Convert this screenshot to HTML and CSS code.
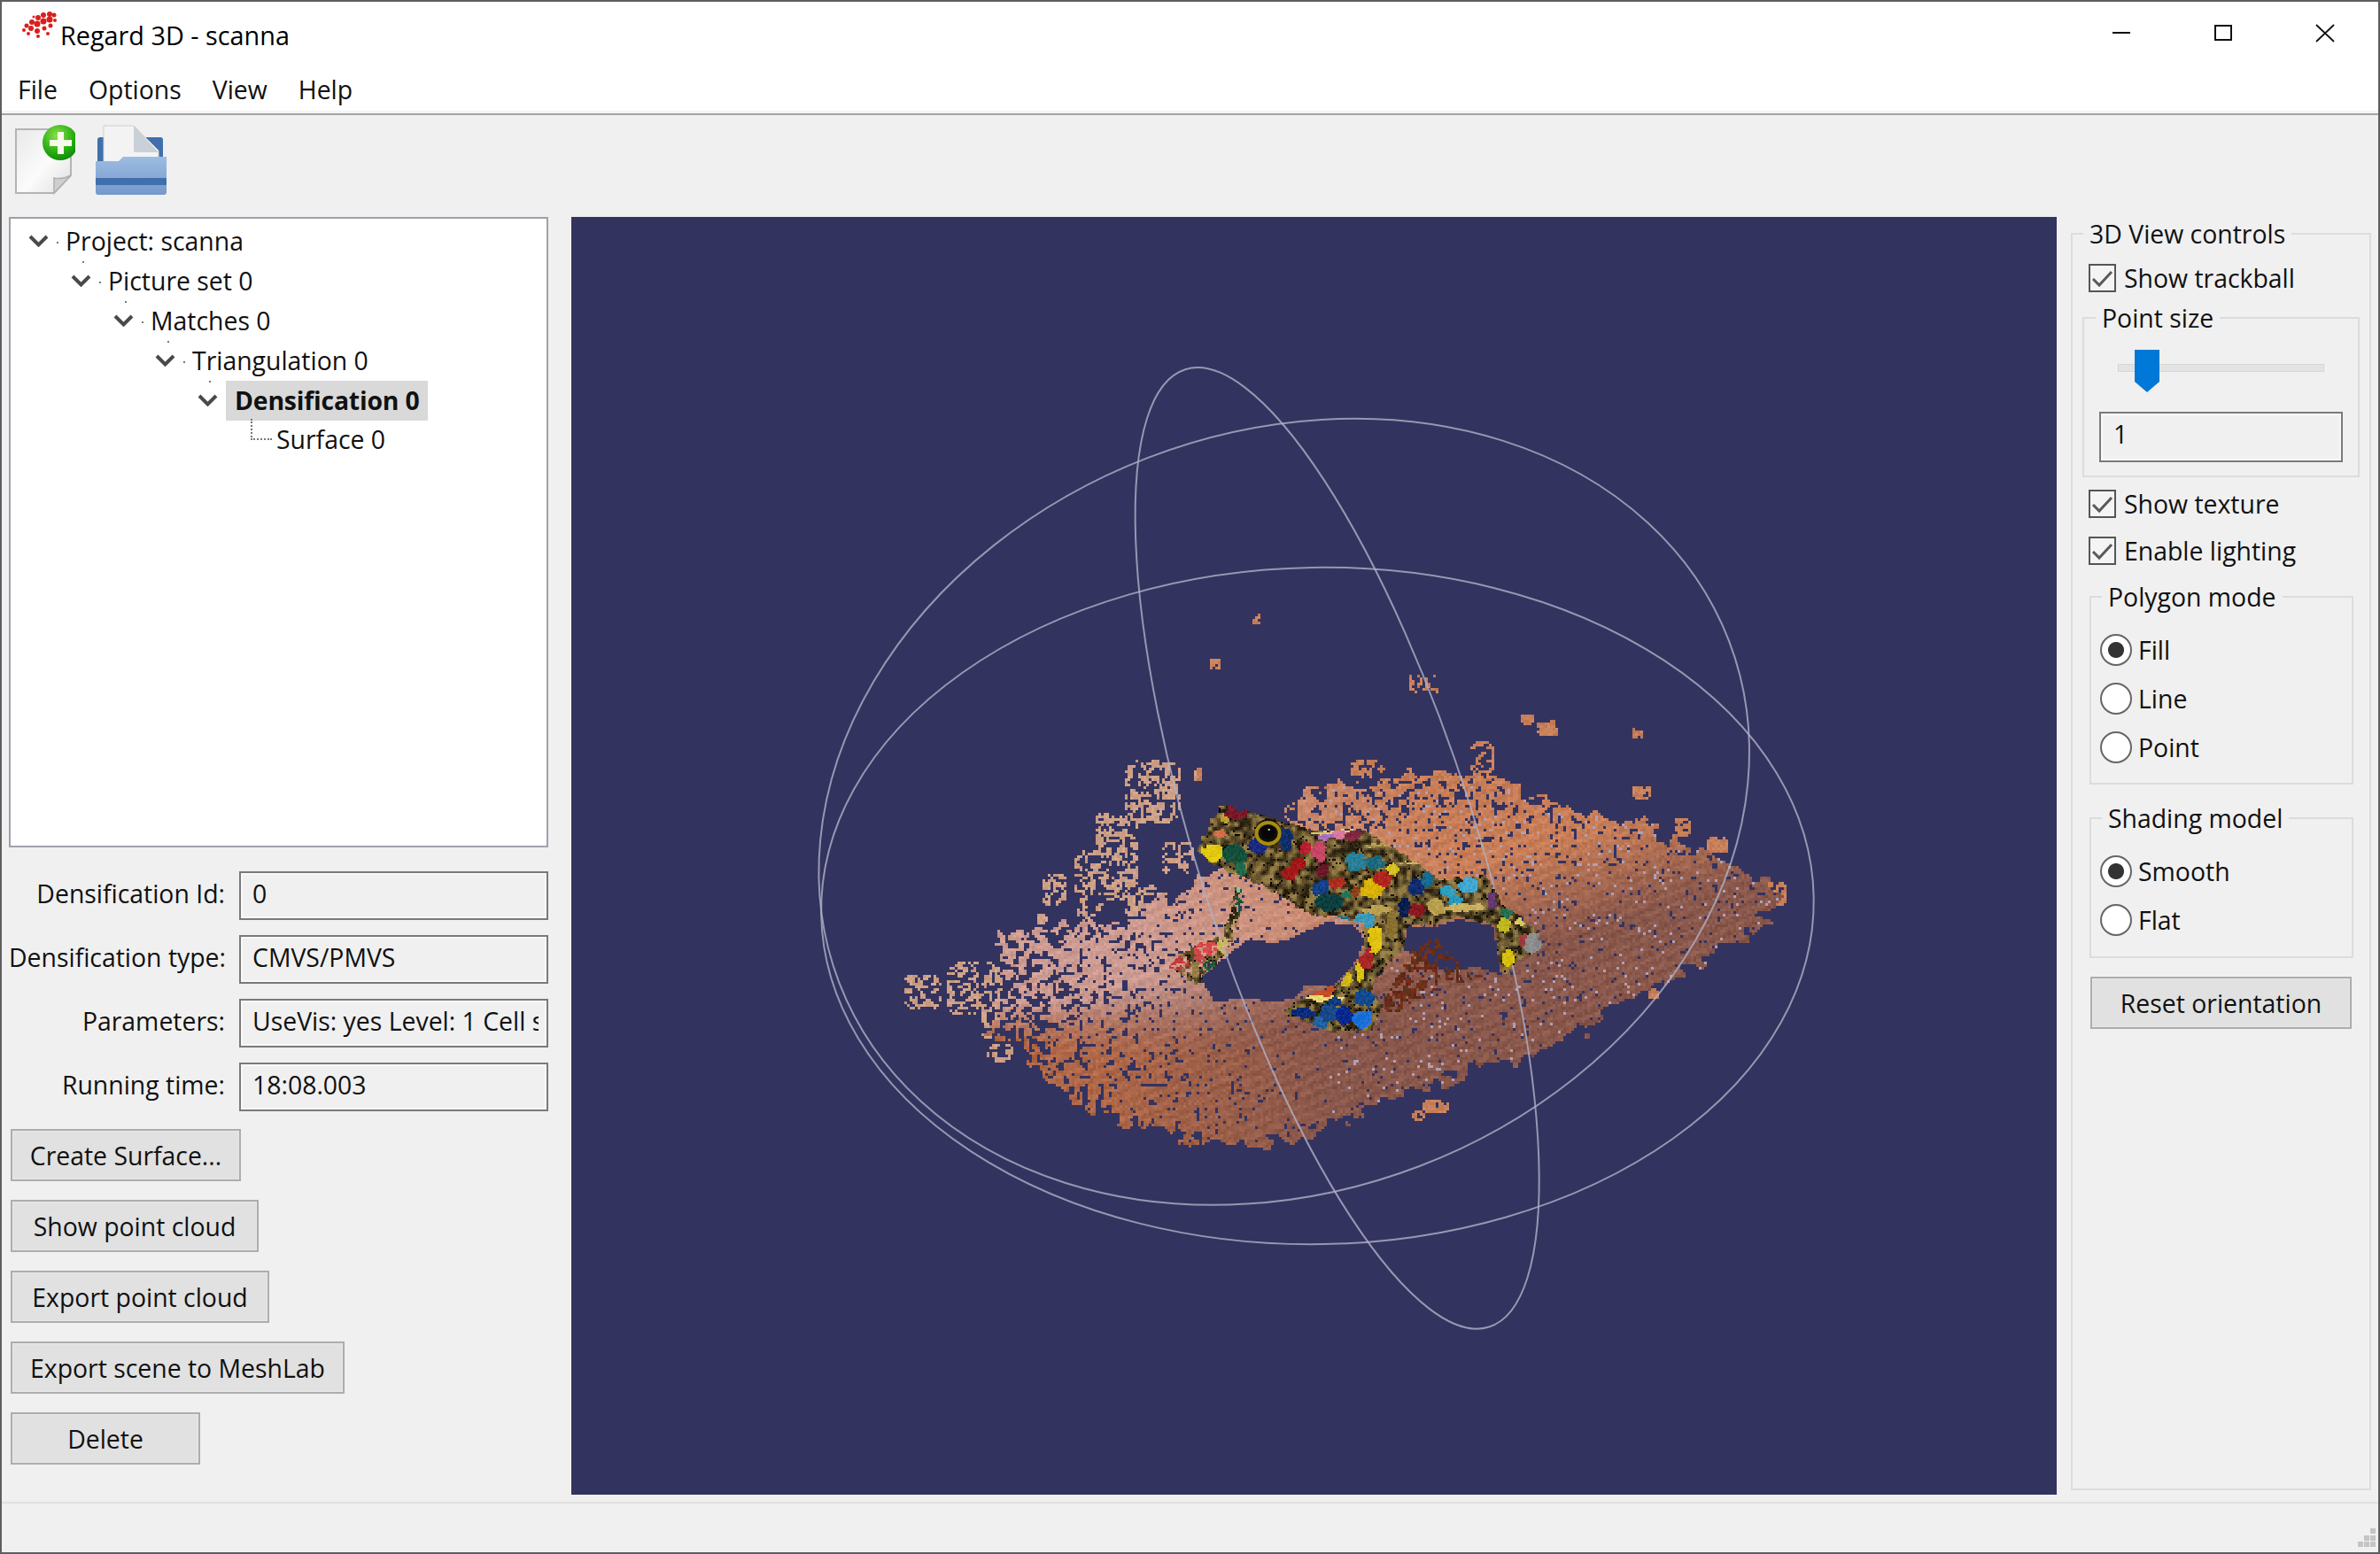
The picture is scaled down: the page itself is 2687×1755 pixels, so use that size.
FILE: index.html
```html
<!DOCTYPE html>
<html lang="en">
<head>
<meta charset="utf-8">
<title>Regard 3D - scanna</title>
<link rel="stylesheet" href="styles.css">
</head>
<body>
<div class="window">
  <header class="titlebar">
    <svg class="app-icon" viewBox="0 0 40 30" width="40" height="30">
      <g fill="#d8201c">
        <circle cx="6" cy="16" r="2.5"/><circle cx="3" cy="21" r="2"/><circle cx="12" cy="12" r="3"/><circle cx="11" cy="19" r="3"/><circle cx="8" cy="25" r="2"/>
        <circle cx="19" cy="7" r="3"/><circle cx="18" cy="14" r="3.5"/><circle cx="18" cy="22" r="3"/><circle cx="19" cy="28" r="2"/><circle cx="25" cy="4" r="3"/>
        <circle cx="25" cy="11" r="3.5"/><circle cx="26" cy="19" r="2.5"/><circle cx="30" cy="25" r="2"/><circle cx="32" cy="3" r="3"/><circle cx="32" cy="9" r="3.5"/>
        <circle cx="33" cy="16" r="2.5"/><circle cx="37" cy="4" r="2.5"/><circle cx="38" cy="10" r="2"/><circle cx="14" cy="6" r="1.5"/>
      </g>
    </svg>
    <span class="title-text">Regard 3D - scanna</span>
    <div class="win-buttons">
      <span class="win-btn"><svg width="22" height="22" viewBox="0 0 22 22"><path d="M1 10h20" stroke="#111" stroke-width="2"/></svg></span>
      <span class="win-btn"><svg width="22" height="22" viewBox="0 0 22 22"><rect x="2" y="2" width="18" height="16" fill="none" stroke="#111" stroke-width="2"/></svg></span>
      <span class="win-btn"><svg width="22" height="22" viewBox="0 0 22 22"><path d="M1 1l20 19M21 1L1 20" stroke="#111" stroke-width="1.8"/></svg></span>
    </div>
  </header>
  <nav class="menubar">
    <span class="menu-item">File</span><span class="menu-item">Options</span><span class="menu-item">View</span><span class="menu-item">Help</span>
  </nav>
  <div class="toolbar">
    <svg class="tool-new" width="68" height="80" viewBox="0 0 68 80">
      <defs>
        <linearGradient id="pg" x1="0" y1="0" x2="1" y2="1"><stop offset="0" stop-color="#e9e9e9"/><stop offset=".55" stop-color="#fbfbfb"/><stop offset="1" stop-color="#dedede"/></linearGradient>
        <radialGradient id="gb" cx=".4" cy=".3" r=".8"><stop offset="0" stop-color="#8be04a"/><stop offset=".6" stop-color="#27ad12"/><stop offset="1" stop-color="#0b7d0a"/></radialGradient>
      </defs>
      <path d="M1 5h62v52L44 77H1z" fill="url(#pg)" stroke="#b4b4b4" stroke-width="2"/>
      <path d="M44 77V60q10 2 19-3z" fill="#cfcfcf" stroke="#b0b0b0" stroke-width="1.5"/>
      <circle cx="51" cy="20" r="20" fill="url(#gb)"/>
      <path d="M48 8h7v9h9v7h-9v9h-7v-9h-9v-7h9z" fill="#f4fbe9"/>
    </svg>
    <svg class="tool-open" width="82" height="80" viewBox="0 0 82 80">
      <defs>
        <linearGradient id="fb" x1="0" y1="0" x2="0" y2="1"><stop offset="0" stop-color="#9dbce2"/><stop offset="1" stop-color="#7499cb"/></linearGradient>
      </defs>
      <path d="M3 17q0-3 3-3h68q3 0 3 3v30H3z" fill="#3f70ad"/>
      <path d="M10 1h34l28 28v15H10z" fill="#f3f3f3" stroke="#d0d0d0"/>
      <path d="M44 1l28 30H46q-2 0-2-2z" fill="#c9d0d8"/>
      <path d="M1 41h26l5-5h49v40q0 3-3 3H4q-3 0-3-3z" fill="url(#fb)"/>
      <rect x="1" y="60" width="80" height="8" fill="#3f70ad"/>
    </svg>
  </div>
  <main class="workspace">
    <section class="left-col">
      <div class="tree">
        <div class="tree-row lv0 linked"><svg class="chev" width="23" height="14" viewBox="0 0 23 14"><path d="M2 2l9.500 9.500L21 2" fill="none" stroke="#4a4a4a" stroke-width="4"/></svg><span class="stub"></span><span class="node">Project: scanna</span></div>
        <div class="tree-row lv1 linked"><svg class="chev" width="23" height="14" viewBox="0 0 23 14"><path d="M2 2l9.500 9.500L21 2" fill="none" stroke="#4a4a4a" stroke-width="4"/></svg><span class="stub"></span><span class="node">Picture set 0</span></div>
        <div class="tree-row lv2 linked"><svg class="chev" width="23" height="14" viewBox="0 0 23 14"><path d="M2 2l9.500 9.500L21 2" fill="none" stroke="#4a4a4a" stroke-width="4"/></svg><span class="stub"></span><span class="node">Matches 0</span></div>
        <div class="tree-row lv3 linked"><svg class="chev" width="23" height="14" viewBox="0 0 23 14"><path d="M2 2l9.500 9.500L21 2" fill="none" stroke="#4a4a4a" stroke-width="4"/></svg><span class="stub"></span><span class="node">Triangulation 0</span></div>
        <div class="tree-row lv4"><svg class="chev" width="23" height="14" viewBox="0 0 23 14"><path d="M2 2l9.500 9.500L21 2" fill="none" stroke="#4a4a4a" stroke-width="4"/></svg><span class="node selected">Densification 0</span></div>
        <div class="tree-row lv5"><span class="elbow"></span><span class="node">Surface 0</span></div>
      </div>
      <div class="props">
        <label class="prop-label">Densification Id:</label><div class="prop-value"><span class="clip">0</span></div>
        <label class="prop-label">Densification type:</label><div class="prop-value"><span class="clip">CMVS/PMVS</span></div>
        <label class="prop-label">Parameters:</label><div class="prop-value"><span class="clip">UseVis: yes Level: 1 Cell size: 2 Threshold: 0.7</span></div>
        <label class="prop-label">Running time:</label><div class="prop-value"><span class="clip">18:08.003</span></div>
      </div>
      <div class="actions">
        <button class="btn w-create">Create Surface...</button>
        <button class="btn w-show">Show point cloud</button>
        <button class="btn w-export">Export point cloud</button>
        <button class="btn w-mesh">Export scene to MeshLab</button>
        <button class="btn w-delete">Delete</button>
      </div>
    </section>
    <canvas id="view3d" class="view3d" width="1677" height="1443"></canvas>
    <fieldset class="group group-view">
      <legend>3D View controls</legend>
      <div class="check first"><span class="box"><svg width="31" height="32" viewBox="0 0 31 32"><path d="M5 17l7 7L26 9" fill="none" stroke="#5a5a5a" stroke-width="3"/></svg></span>Show trackball</div>
      <fieldset class="group group-point">
        <legend>Point size</legend>
        <div class="slider"><span class="track"></span><svg class="thumb" width="28" height="48" viewBox="0 0 28 48"><path d="M0 0h28v36L14 48 0 36z" fill="#0078d7"/></svg></div>
        <div class="num-field">1</div>
      </fieldset>
      <div class="check second"><span class="box"><svg width="31" height="32" viewBox="0 0 31 32"><path d="M5 17l7 7L26 9" fill="none" stroke="#5a5a5a" stroke-width="3"/></svg></span>Show texture</div>
      <div class="check third"><span class="box"><svg width="31" height="32" viewBox="0 0 31 32"><path d="M5 17l7 7L26 9" fill="none" stroke="#5a5a5a" stroke-width="3"/></svg></span>Enable lighting</div>
      <fieldset class="group group-poly">
        <legend>Polygon mode</legend>
        <div class="radio on">Fill</div>
        <div class="radio">Line</div>
        <div class="radio">Point</div>
      </fieldset>
      <fieldset class="group group-shade">
        <legend>Shading model</legend>
        <div class="radio on">Smooth</div>
        <div class="radio">Flat</div>
      </fieldset>
      <button class="btn w-reset">Reset orientation</button>
    </fieldset>
  </main>
  <footer class="statusbar">
    <svg width="27" height="27" viewBox="0 0 27 27" fill="#c4c4c4"><rect x="18" y="0" width="6" height="6"/><rect x="11" y="8" width="6" height="6"/><rect x="18" y="8" width="6" height="6"/><rect x="4" y="15" width="6" height="6"/><rect x="11" y="15" width="6" height="6"/><rect x="18" y="15" width="6" height="6"/></svg>
  </footer>
</div>
<script src="app.js"></script>
</body>
</html>
```

FILE: styles.css
```css
* { box-sizing: border-box; }
html, body { margin: 0; height: 100%; }
body {
  background: #5e5e5e;
  padding: 2px;
  font-family: "Open Sans", "Noto Sans", sans-serif;
  font-size: 28.400px;
  color: #111;
  overflow: hidden;
}
.window {
  width: 2683px;
  height: 1751px;
  background: #f0f0f0;
  display: flex;
  flex-direction: column;
  filter: blur(0.45px);
}
.titlebar {
  height: 72px;
  background: #fff;
  display: flex;
  align-items: center;
  padding-left: 22px;
}
.app-icon { margin: -20px 4px 0 0; }
.title-text { font-size: 28.800px; color: #000; padding-top: 3px; }
.win-buttons { margin-left: auto; display: flex; padding-right: 3px; }
.win-btn { width: 115px; display: flex; justify-content: center; }
.menubar {
  height: 56px;
  background: #fff;
  display: flex;
  align-items: flex-start;
  padding: 8px 0 0 18px;
  gap: 35px;
  border-bottom: 2px solid #a3a3a3;
  box-shadow: inset 0 -3px 0 #f5f5f5;
}
.menu-item { line-height: 38px; }
.toolbar {
  height: 115px;
  display: flex;
  align-items: flex-start;
  padding: 11px 0 0 15px;
  gap: 22px;
}
.workspace {
  height: 1451px;
  display: flex;
  align-items: flex-start;
  padding-left: 8px;
}
.left-col { width: 609px; flex: none; }
.tree {
  height: 712px;
  background: #fff;
  border: 2px solid #9ea1aa;
  padding-top: 3px;
}
.tree-row {
  height: 44.900px;
  display: flex;
  align-items: center;
  position: relative;
  white-space: nowrap;
}
.lv0 { padding-left: 20px; }
.lv1 { padding-left: 68px; }
.lv2 { padding-left: 116px; }
.lv3 { padding-left: 163px; }
.lv4 { padding-left: 211px; }
.lv5 { padding-left: 271px; }
.chev { flex: none; }
.stub {
  width: 2px;
  height: 2px;
  background: #777;
  margin: 4px 8px 0 9px;
  flex: none;
}
.linked::after {
  content: "";
  position: absolute;
  width: 2px;
  height: 2px;
  background: #777;
  top: 45px;
}
.lv0::after { left: 81px; }
.lv1::after { left: 129px; }
.lv2::after { left: 177px; }
.lv3::after { left: 224px; }
.node { line-height: 45px; }
.selected {
  background: #d9d9d9;
  font-weight: 700;
  padding: 0 10px;
  margin-left: 9px;
  height: 45px;
  letter-spacing: -0.2px;
}
.elbow {
  width: 24px;
  height: 24px;
  border-left: 2px dotted #777;
  border-bottom: 2px dotted #777;
  margin: -24px 5px 0 0;
  flex: none;
}
.props {
  margin-top: 27px;
  display: grid;
  grid-template-columns: 244px 349px;
  grid-auto-rows: 55px;
  column-gap: 16px;
  row-gap: 17px;
}
.prop-label { text-align: right; line-height: 50px; white-space: nowrap; }
.prop-value {
  background: #f0f0f0;
  border: 2px solid #7a7a7a;
  line-height: 46px;
  padding: 0 9px 0 13px;
  box-shadow: inset 0 0 0 2px #f8f8f8;
}
.clip { display: block; overflow: hidden; white-space: nowrap; }
.actions {
  margin: 20px 0 0 2px;
  display: flex;
  flex-direction: column;
  align-items: flex-start;
  gap: 21px;
}
.btn {
  height: 59px;
  background: #e1e1e1;
  border: 2px solid #adadad;
  font: inherit;
  color: inherit;
  padding: 0;
  display: block;
  box-shadow: inset 0 0 0 1px #e8e8e8;
}
.w-create { width: 260px; }
.w-show { width: 280px; }
.w-export { width: 292px; }
.w-mesh { width: 377px; }
.w-delete { width: 214px; }
.view3d {
  width: 1677px;
  height: 1443px;
  margin-left: 26px;
  flex: none;
  filter: blur(0.5px);
}
.group {
  margin: 0;
  padding: 0;
  border: 2px solid #dcdcdc;
  min-width: 0;
}
.group legend {
  padding: 0 7px;
  line-height: 38px;
  white-space: nowrap;
}
.group-view {
  width: 339px;
  height: 1438px;
  margin-left: 16px;
  padding: 0 11px;
  flex: none;
}
.group-view > legend { margin-left: 1px; }
.group-point { margin-top: 10px; padding: 0 17px 15px; }
.group-point > legend { margin-left: -4px; }
.group-poly { margin: 17px 7px 0 8px; padding: 0 10px 24px; }
.group-shade { margin: 19px 7px 0 8px; padding: 0 10px 25px; }
.group-poly > legend, .group-shade > legend { margin-left: 2px; }
.check {
  display: flex;
  align-items: center;
  height: 32px;
  margin-left: 7px;
  white-space: nowrap;
}
.check.first { margin-top: 15px; }
.check.second { margin-top: 14px; }
.check.third { margin-top: 21px; }
.box {
  width: 31px;
  height: 32px;
  background: #f4f4f4;
  border: 2.500px solid #555;
  margin-right: 9px;
  flex: none;
  position: relative;
}
.box svg { position: absolute; left: -2px; top: -2px; }
.slider {
  height: 48px;
  margin-top: 17px;
  position: relative;
}
.track {
  position: absolute;
  left: 21px;
  width: 233px;
  top: 16px;
  height: 9px;
  background: #e3e3e3;
  border: 1px solid #d6d6d6;
}
.thumb { position: absolute; left: 40px; top: 0; }
.num-field {
  height: 57px;
  margin-top: 22px;
  border: 2px solid #7a7a7a;
  line-height: 46px;
  padding-left: 14px;
  box-shadow: inset 0 0 0 2px #f8f8f8;
}
.radio {
  height: 32px;
  margin-top: 23px;
  display: flex;
  align-items: center;
  white-space: nowrap;
}
.group-poly > legend + .radio, .group-shade > legend + .radio { margin-top: 25px; }
.radio::before {
  content: "";
  width: 32px;
  height: 32px;
  border-radius: 50%;
  background: #fff;
  border: 2.500px solid #666;
  margin-right: 7px;
  flex: none;
}
.radio.on::before {
  background: radial-gradient(circle, #333 0 8.500px, #fff 9.500px);
}
.w-reset { width: 295px; margin: 21px 0 0 9px; }
.statusbar {
  flex: 1;
  border-top: 2px solid #e0e0e0;
  display: flex;
  justify-content: flex-end;
  align-items: flex-end;
}
```

FILE: app.js
```js
(function () {
  var cv = document.getElementById('view3d');
  var ctx = cv.getContext('2d');
  var OX = 645, OY = 245;

  function z5(p) { return [1000 + p[0] / 1.479, 800 + p[1] / 2.904]; }
  function z7(p) { return [1300 + p[0] / 3, 870 + p[1] / 3]; }

  var seed = 90210;
  function rnd() {
    seed |= 0; seed = seed + 0x6D2B79F5 | 0;
    var t = Math.imul(seed ^ seed >>> 15, 1 | seed);
    t = t + Math.imul(t ^ t >>> 7, 61 | t) ^ t;
    return ((t ^ t >>> 14) >>> 0) / 4294967296;
  }
  function hash(x, y) {
    var h = Math.imul(x, 374761393) + Math.imul(y, 668265263) | 0;
    h = Math.imul(h ^ h >>> 13, 1274126177);
    return ((h ^ h >>> 16) >>> 0) / 4294967296;
  }
  function noise(x, y) {
    var xi = Math.floor(x), yi = Math.floor(y), fx = x - xi, fy = y - yi;
    fx = fx * fx * (3 - 2 * fx); fy = fy * fy * (3 - 2 * fy);
    var a = hash(xi, yi), b = hash(xi + 1, yi), c = hash(xi, yi + 1), d = hash(xi + 1, yi + 1);
    return a + (b - a) * fx + (c - a) * fy + (a - b - c + d) * fx * fy;
  }
  function clamp(t) { return Math.max(0, Math.min(1, t)); }
  function inside(poly, x, y) {
    var c = false;
    for (var i = 0, j = poly.length - 1; i < poly.length; j = i++) {
      var a = poly[i], b = poly[j];
      if ((a[1] > y) !== (b[1] > y) && x < (b[0] - a[0]) * (y - a[1]) / (b[1] - a[1]) + a[0]) c = !c;
    }
    return c;
  }
  function mix(a, b, t) { t = clamp(t); return [a[0] + (b[0] - a[0]) * t, a[1] + (b[1] - a[1]) * t, a[2] + (b[2] - a[2]) * t]; }
  function cell(x, y, s, c) {
    ctx.fillStyle = 'rgb(' + (c[0] | 0) + ',' + (c[1] | 0) + ',' + (c[2] | 0) + ')';
    ctx.fillRect(x - OX, y - OY, s, s);
  }

  ctx.fillStyle = '#333360';
  ctx.fillRect(0, 0, cv.width, cv.height);

  var cloud = [[1500,600],[1455,720],[1340,830],[1270,920],[1180,1030],[1020,1160],[860,1260],[700,1390],[610,1430],[490,1400],[390,1340],[330,1290],[270,1210],[220,1120],[170,1050],[210,950],[190,750],[300,710],[400,690],[480,600],[560,540],[650,400],[700,300],[700,250],[780,250],[850,210],[950,200],[1060,240],[1140,330],[1270,380],[1400,510]].map(z5);
  var hole1 = [[160,700],[280,600],[330,565],[420,585],[520,540],[590,510],[680,520],[720,570],[690,640],[640,700],[600,730],[520,720],[480,770],[400,780],[340,770],[280,770],[210,780]].map(z7);
  var hole2 = [[860,520],[950,530],[1030,500],[1150,520],[1170,620],[1180,690],[1100,660],[1000,680],[900,630],[850,600]].map(z7);
  var patches = [[400,165,490,370],[350,330,420,470],[460,435,510,535],[315,460,420,620],[260,540,300,640],[400,580,465,700],[320,620,360,700],[250,670,265,700],[190,730,285,800],[30,870,90,980],[100,830,190,1000],[160,980,210,1080],[170,1100,210,1150],[775,170,830,220],[975,110,1012,210],[1060,15,1078,45],[1088,40,1120,85],[1245,60,1260,95],[1245,250,1272,290],[1315,360,1340,410],[1370,420,1402,470],[1460,570,1502,640],[895,1285,935,1320],[880,1320,895,1342],[515,195,525,235],[1030,1110,1062,1140],[1272,918,1288,945]];
  var extra = [[1414,692,1422,702],[1366,742,1376,754],[1590,760,1622,782]];
  var ps = patches.map(function (p) { var a = z5([p[0], p[1]]), b = z5([p[2], p[3]]); return [a[0], a[1], b[0], b[1]]; }).concat(extra);

  function groundColor(x, y) {
    var pink = [206, 156, 146], orange = [200, 126, 88], brown = [138, 88, 76], rust = [176, 104, 72];
    var c = mix(pink, orange, (x + (1100 - y) * 0.5 - 1300) / 400);
    var edge = (y - 1010) - (1600 - x) * 0.32;
    c = mix(c, brown, (edge + 10) / 110);
    c = mix(c, rust, (1500 - x) / 260 * clamp((y - 1130) / 60));
    var stripe = Math.sin((x * 0.35 + y * 0.9) * 0.55) * 6;
    var j = (rnd() - 0.5) * 22 + stripe;
    return [c[0] + j, c[1] + j * 0.85, c[2] + j * 0.8];
  }

  var S = 3;
  var x, y, i;
  for (y = 690; y < 1310; y += S) {
    for (x = 1000; x < 2040; x += S) {
      var jx = x + (noise(x / 10, y / 10) - 0.5) * 24;
      var jy = y + (noise(x / 10 + 40, y / 10 + 9) - 0.5) * 24;
      var on = inside(cloud, jx, jy);
      var n = noise(x / 4.5, y / 4.5);
      var th = 0.1 + 0.34 * clamp((1400 - x) / 280) + 0.22 * clamp((1010 - y) / 110) * clamp((x - 1350) / 60);
      if (on) {
        if (inside(hole1, x, y) || inside(hole2, x, y)) continue;
        if (n < th || rnd() < 0.02) continue;
        var g = groundColor(x, y);
        if (x > 1500 && rnd() < 0.03) g = [178, 160, 178];
        cell(x, y, S, g);
      } else {
        for (i = 0; i < ps.length; i++) {
          var p = ps[i];
          var cx = (p[0] + p[2]) / 2, cy = (p[1] + p[3]) / 2, rx = (p[2] - p[0]) / 2 + 1, ry = (p[3] - p[1]) / 2 + 1;
          var dx = (x - cx) / rx, dy = (y - cy) / ry;
          if (Math.abs(dx) < 1 && Math.abs(dy) < 1 && dx * dx + dy * dy < 1.4 && noise(x / 3.5 + 3, y / 3.5 + 5) > (rx * ry < 120 ? 0.25 : 0.5)) {
            var gp = x < 1350 ? [205, 160, 135] : [200, 128, 90];
            var w = (rnd() - 0.5) * 20;
            cell(x, y, S, [gp[0] + w, gp[1] + w, gp[2] + w]);
            break;
          }
        }
      }
    }
  }

  // dark shadow crumbs under the frog
  var shadow = [[820,710],[880,600],[960,560],[1010,620],[1060,680],[1150,700],[1190,690],[1000,720],[880,780],[820,820],[760,800]].map(z7);
  for (y = 1020; y < 1160; y += S) {
    for (x = 1560; x < 1710; x += S) {
      if (inside(shadow, x, y) && noise(x / 4, y / 4) > 0.5) cell(x, y, S, [84 + rnd() * 40, 36 + rnd() * 20, 20 + rnd() * 14]);
    }
  }

  // trackball
  function ring(cx, cy, a, b, deg) {
    ctx.beginPath();
    ctx.ellipse(cx * 1.7136 - OX, cy * 1.7136 - OY, a * 1.7136, b * 1.7136, deg * Math.PI / 180, 0, Math.PI * 2);
    ctx.stroke();
  }
  ctx.strokeStyle = 'rgba(176,176,198,0.8)';
  ctx.lineWidth = 2;
  ring(868, 597, 327, 223, -1);
  ring(846, 535, 314, 250, -21);
  ring(881, 559, 331, 92, 72.4);

  // frog
  var body = [[150,270],[230,115],[370,150],[530,195],[720,205],[850,280],[980,370],[1130,355],[1180,450],[1300,540],[1320,600],[1240,640],[1200,690],[1170,640],[1160,520],[1030,490],[950,520],[860,520],[850,600],[770,680],[740,740],[780,800],[740,880],[600,880],[450,820],[480,780],[640,720],[720,610],[720,520],[640,500],[520,480],[400,400],[290,350],[200,310]].map(z7);
  var arm = [[280,390],[310,400],[295,510],[265,590],[190,680],[150,725],[60,660],[130,590],[240,560]].map(z7);
  var blobs = [
    [205,275,38,30,'#e0c810'],[230,215,25,12,'#d87050'],[280,140,38,24,'#7a1a28'],[245,160,14,18,'#c0a030'],[280,280,38,36,'#14503c'],[300,325,22,20,'#1e6a48'],[360,250,32,30,'#1a2a80'],[450,230,26,40,'#14306a'],
    [520,260,22,26,'#b82030'],[565,270,22,35,'#c84868'],[585,220,30,12,'#b070c0'],[630,215,25,12,'#d878a0'],[680,220,28,15,'#802840'],[495,315,27,23,'#a01818'],[462,345,27,25,'#a01818'],[575,335,22,24,'#6a1828'],
    [690,305,36,32,'#2a8098'],[755,310,33,25,'#1e6a80'],[815,330,21,23,'#d8c020'],[780,365,31,26,'#b02820'],[745,400,38,32,'#d8b008'],[625,378,26,18,'#b03020'],[570,395,28,22,'#14408a'],[690,405,20,20,'#8a4018'],
    [600,445,48,30,'#0e4040'],[660,420,22,12,'#1e7a60'],[930,365,22,25,'#1a6a90'],[895,395,28,28,'#102a70'],[855,460,20,35,'#0a2050'],[895,470,25,22,'#8a1a20'],[720,505,36,26,'#3a98b8'],[650,505,22,15,'#2a7088'],
    [755,570,26,46,'#e0c010'],[725,635,23,33,'#a82828'],[700,680,13,38,'#d8c010'],[655,705,23,28,'#d0b818'],[1070,385,36,26,'#40a8d0'],[1000,410,31,20,'#30a0c0'],[1025,435,26,15,'#2a98b8'],[1200,480,18,15,'#207050'],
    [1190,520,23,26,'#c0b820'],[1250,510,26,12,'#d8c860'],[1290,585,30,36,'#8c8c8c'],[1205,635,23,28,'#d8c010'],[1258,575,12,22,'#a04040'],[1150,440,10,30,'#6a3a70'],[1040,352,45,6,'#e090b0'],
    [650,830,30,30,'#0a2a90'],[710,840,36,30,'#1c70d8'],[720,770,36,28,'#124a90'],[600,820,36,30,'#1a4a8a'],[510,820,40,18,'#0c2a7a'],[570,850,25,25,'#2060a0'],[620,780,26,18,'#123a80'],[590,770,70,11,'#e8d870'],[570,742,44,22,'#c85028'],
    [180,600,42,25,'#d84848'],[90,650,30,20,'#c03838'],[160,635,20,14,'#c04848'],[240,585,18,30,'#c8b860'],[190,660,18,22,'#1e5a38'],[295,445,10,50,'#1a5a40'],[295,400,12,10,'#70d0a8'],[275,530,6,35,'#b0a040'],
    [620,205,90,5,'#d8cc70'],[780,250,60,5,'#b8a450'],[890,310,50,5,'#c8b060'],[1060,460,70,14,'#c8b060'],[960,460,30,30,'#b8a050'],[760,470,50,14,'#b8a050'],[810,520,18,60,'#8a7030']
  ];
  var blobsF = blobs.map(function (b) { var c = z7([b[0], b[1]]); return [c[0], c[1], b[2] / 3, b[3] / 3, b[4]]; });
  function hex(h) { return [parseInt(h.substr(1, 2), 16), parseInt(h.substr(3, 2), 16), parseInt(h.substr(5, 2), 16)]; }
  var F = 2;
  for (y = 900; y < 1180; y += F) {
    for (x = 1310; x < 1750; x += F) {
      var qx = x + (noise(x / 5, y / 5) - 0.5) * 5, qy = y + (noise(x / 5 + 7, y / 5 + 3) - 0.5) * 5;
      var inB = inside(body, qx, qy), inA = inside(arm, qx, qy);
      if (!inB && !inA) continue;
      if (inA && !inB && noise(x / 3, y / 3) < 0.3) continue;
      var col = null;
      for (i = 0; i < blobsF.length; i++) {
        var b = blobsF[i], ex = (qx - b[0]) / b[2], ey = (qy - b[1]) / b[3];
        if (ex * ex + ey * ey < 1) { col = hex(b[4]); break; }
      }
      var v = (rnd() - 0.5) * 22;
      if (col) {
        cell(x, y, F, [col[0] + v, col[1] + v, col[2] + v]);
      } else {
        var t = noise(x / 5, y / 5);
        var base = mix([38, 30, 14], [150, 126, 70], t * 1.5 - 0.2);
        if (rnd() < 0.06) base = [12, 9, 6];
        cell(x, y, F, [base[0] + v, base[1] + v, base[2] + v * 0.7]);
      }
    }
  }
  // eye
  var e = z7([395, 210]);
  ctx.fillStyle = '#120f08';
  ctx.beginPath(); ctx.arc(e[0] - OX, e[1] - OY, 15, 0, 7); ctx.fill();
  ctx.strokeStyle = '#a88c10';
  ctx.lineWidth = 4;
  ctx.beginPath(); ctx.ellipse(e[0] - OX, e[1] - OY + 1, 13, 12, 0, 0, 7); ctx.stroke();
  ctx.fillStyle = '#060606';
  ctx.beginPath(); ctx.arc(e[0] - OX, e[1] - OY, 8, 0, 7); ctx.fill();
  ctx.fillStyle = '#e8d8c8';
  ctx.fillRect(e[0] - OX, e[1] - OY - 4, 2, 2);
})();
```
